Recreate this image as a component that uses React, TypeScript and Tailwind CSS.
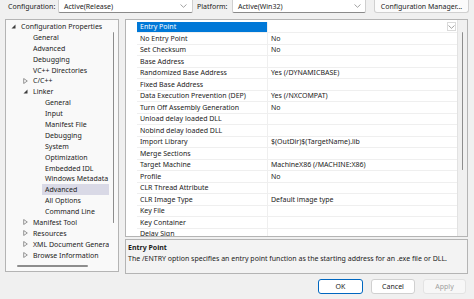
import React from "react";

const FONT = { fontFamily: '"Noto Sans", "Liberation Sans", sans-serif' };

type TreeItem = { label: string; level: number; arrow?: "open" | "closed"; selected?: boolean };

const tree: TreeItem[] = [
  { label: "Configuration Properties", level: 0, arrow: "open" },
  { label: "General", level: 1 },
  { label: "Advanced", level: 1 },
  { label: "Debugging", level: 1 },
  { label: "VC++ Directories", level: 1 },
  { label: "C/C++", level: 1, arrow: "closed" },
  { label: "Linker", level: 1, arrow: "open" },
  { label: "General", level: 2 },
  { label: "Input", level: 2 },
  { label: "Manifest File", level: 2 },
  { label: "Debugging", level: 2 },
  { label: "System", level: 2 },
  { label: "Optimization", level: 2 },
  { label: "Embedded IDL", level: 2 },
  { label: "Windows Metadata", level: 2 },
  { label: "Advanced", level: 2, selected: true },
  { label: "All Options", level: 2 },
  { label: "Command Line", level: 2 },
  { label: "Manifest Tool", level: 1, arrow: "closed" },
  { label: "Resources", level: 1, arrow: "closed" },
  { label: "XML Document Genera", level: 1, arrow: "closed" },
  { label: "Browse Information", level: 1, arrow: "closed" },
];

const props: [string, string][] = [
  ["Entry Point", ""],
  ["No Entry Point", "No"],
  ["Set Checksum", "No"],
  ["Base Address", ""],
  ["Randomized Base Address", "Yes (/DYNAMICBASE)"],
  ["Fixed Base Address", ""],
  ["Data Execution Prevention (DEP)", "Yes (/NXCOMPAT)"],
  ["Turn Off Assembly Generation", "No"],
  ["Unload delay loaded DLL", ""],
  ["Nobind delay loaded DLL", ""],
  ["Import Library", "$(OutDir)$(TargetName).lib"],
  ["Merge Sections", ""],
  ["Target Machine", "MachineX86 (/MACHINE:X86)"],
  ["Profile", "No"],
  ["CLR Thread Attribute", ""],
  ["CLR Image Type", "Default image type"],
  ["Key File", ""],
  ["Key Container", ""],
  ["Delay Sign", ""],
];

function Chevron({ className = "" }: { className?: string }) {
  return (
    <svg width="7" height="4" viewBox="0 0 7 4" className={className}>
      <path d="M0.5 0.5 L3.5 3.3 L6.5 0.5" fill="none" stroke="#8a8a8a" strokeWidth="0.8" />
    </svg>
  );
}

function Arrow({ kind }: { kind?: "open" | "closed" }) {
  if (!kind) return null;
  if (kind === "open")
    return (
      <svg width="5" height="5" viewBox="0 0 5 5">
        <path d="M4.5 0.5 L4.5 4.5 L0.5 4.5 Z" fill="#3c3c3c" />
      </svg>
    );
  return (
    <svg width="5" height="6" viewBox="0 0 5 6">
      <path d="M0.7 0.5 L4.3 3 L0.7 5.5 Z" fill="none" stroke="#6a6a6a" strokeWidth="0.7" />
    </svg>
  );
}

export default function App() {
  return (
    <div
      className="w-[474px] h-[299px] bg-[#f0f0f0] overflow-hidden flex flex-col text-[7px] text-[#1b1b1b] leading-none"
      style={FONT}
    >
      {/* top row */}
      <div className="h-[13px] flex items-stretch">
        <div className="ml-[8px] w-[50px] flex items-center">Configuration:</div>
        <div className="w-[135px] bg-white border-x border-b border-[#cfcfcf] border-b-[#8a8a8a] rounded-b-[2px] flex items-center pl-[5px] pr-[5px]">
          <span className="flex-1">Active(Release)</span>
          <Chevron />
        </div>
        <div className="ml-[4px] w-[35px] flex items-center">Platform:</div>
        <div className="w-[134px] bg-white border-x border-b border-[#cfcfcf] border-b-[#8a8a8a] rounded-b-[2px] flex items-center pl-[5px] pr-[4px]">
          <span className="flex-1">Active(Win32)</span>
          <Chevron />
        </div>
        <div className="ml-[8px] w-[95px] bg-[#fbfbfb] border-x border-b border-[#d0d0d0] rounded-b-[3px] flex items-center justify-center">
          Configuration Manager...
        </div>
      </div>

      {/* main */}
      <div className="mt-[6px] flex items-start">
        {/* tree */}
        <div className="ml-[5px] w-[114px] h-[253px] border border-[#b4b4b4] bg-[#f9f9f9] flex flex-col">
          <div className="flex flex-1">
            <div className="flex-1 pt-[1px]">
              {tree.map((t, i) => (
                <div key={i} className="h-[10.9px] flex items-stretch" style={{ paddingLeft: t.level * 12 + 1 }}>
                  <div className="w-[11px] flex items-center pl-[4px]">
                    <Arrow kind={t.arrow} />
                  </div>
                  <div className={`flex-1 flex items-center pl-[3px] whitespace-nowrap overflow-hidden ${t.selected ? "bg-[#d9d9e6]" : ""}`}>
                    {t.label}
                  </div>
                </div>
              ))}
            </div>
            <div className="w-[10px] pt-[12px] flex justify-center">
              <div className="w-[1.5px] h-[191px] bg-[#8d8d8d] rounded-full" />
            </div>
          </div>
          <div className="h-[11px] flex items-center pl-[11px]">
            <div className="w-[71px] h-[1.5px] bg-[#8d8d8d] rounded-full" />
          </div>
        </div>

        {/* right column */}
        <div className="ml-[6px] w-[343px] flex flex-col">
          <div className="h-[218px] border border-[#b4b4b4] bg-white flex overflow-hidden">
            <div className="w-[11px]" />
            <div className="flex-1 pt-[1.5px] overflow-hidden">
              {props.map(([n, v], i) => (
                <div key={i} className="h-[11.5px] flex border-b border-[#efefef]">
                  <div
                    className={`w-[130px] shrink-0 flex items-center pl-[3px] whitespace-nowrap overflow-hidden ${
                      i === 0 ? "bg-[#0078d7] text-white" : ""
                    }`}
                  >
                    {n}
                  </div>
                  <div className="flex-1 flex items-center pl-[3px] border-l border-[#efefef] whitespace-nowrap">
                    <span className="flex-1">{v}</span>
                    {i === 0 && (
                      <div className="w-[9px] h-[9px] border border-[#dadada] bg-white flex items-center justify-center mr-[1px]">
                        <Chevron />
                      </div>
                    )}
                  </div>
                </div>
              ))}
            </div>
            <div className="w-[10px] bg-[#f0f0f0] border-l border-[#e2e2e2] pt-[12px] flex justify-center">
              <div className="w-[1.5px] h-[138px] bg-[#8d8d8d] rounded-full" />
            </div>
          </div>
          <div className="mt-[2px] h-[35px] border border-[#b4b4b4] bg-[#f3f3f3] pl-[2px] pt-[4px]">
            <div className="font-bold">Entry Point</div>
            <div className="mt-[4px]">
              The /ENTRY option specifies an entry point function as the starting address for an .exe file or DLL.
            </div>
          </div>
        </div>
      </div>

      {/* buttons */}
      <div className="mt-[5px] flex justify-end gap-[8px] pr-[8px]">
        <div className="w-[45px] h-[15px] bg-white border-[1.5px] border-[#0067c0] rounded-[3px] flex items-center justify-center">
          OK
        </div>
        <div className="w-[44px] h-[15px] bg-white border border-[#d0d0d0] rounded-[3px] flex items-center justify-center">
          Cancel
        </div>
        <div className="w-[43px] h-[15px] bg-[#f7f7f7] border border-[#e3e3e3] rounded-[3px] flex items-center justify-center text-[#a0a0a0]">
          Apply
        </div>
      </div>
    </div>
  );
}
